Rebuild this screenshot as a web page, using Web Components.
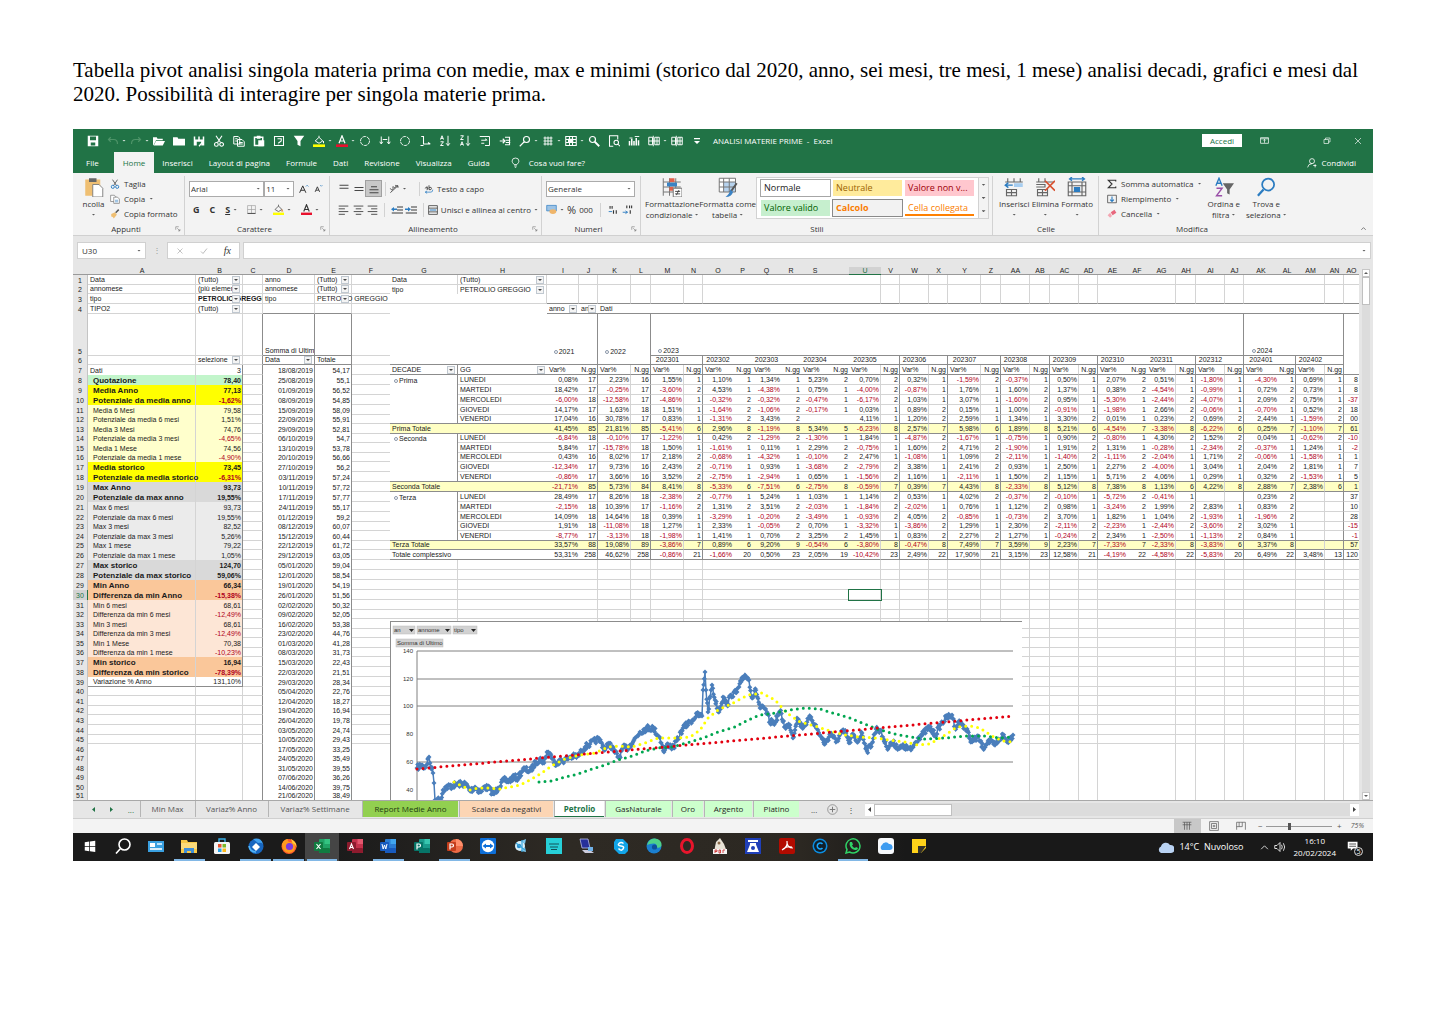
<!DOCTYPE html>
<html lang="it">
<head>
<meta charset="utf-8">
<title>Tabella pivot analisi singola materia prima</title>
<style>
html,body{margin:0;background:#fff}
</style>
</head>
<body>
<doc-page>
  <span slot="intro">Tabella pivot analisi singola materia prima con medie, max e minimi (storico dal 2020, anno, sei mesi, tre mesi, 1 mese) analisi decadi, grafici e mesi dal 2020. Possibilità di interagire per singola materie prima.</span>
  <title-bar></title-bar>
  <ribbon-tabs></ribbon-tabs>
  <ribbon-bar></ribbon-bar>
  <formula-bar></formula-bar>
  <sheet-view></sheet-view>
  <sheet-tabs></sheet-tabs>
  <status-bar></status-bar>
  <task-bar></task-bar>
</doc-page>
<script>
const UI = '"Open Sans","Noto Sans",sans-serif';
const RESET = `:host,*{box-sizing:border-box}
button,input,select{font:inherit;color:inherit;margin:0;padding:0;border:0;background:none;border-radius:0}
button{display:flex;align-items:center;justify-content:center;white-space:nowrap}
a{color:inherit;text-decoration:none}`;

/* Registers a custom element whose shadow root is filled by html(host). */
function define(name, css, html) {
  customElements.define(name, class extends HTMLElement {
    connectedCallback() {
      if (this.shadowRoot) return;
      this.attachShadow({ mode: 'open' }).innerHTML = `<style>${RESET}${css}</style>` + html(this);
    }
  });
}

/* ---------- icons (16 unit box) ---------- */
const S = (d, w = 1.3, c = 'currentColor') => `<path d="${d}" fill="none" stroke="${c}" stroke-width="${w}"/>`;
const F = (d, c = 'currentColor') => `<path d="${d}" fill="${c}"/>`;
const R = (x, y, w, h, c, rx = 0) => `<rect x="${x}" y="${y}" width="${w}" height="${h}" fill="${c}" rx="${rx}"/>`;
const C = (x, y, r, c) => `<circle cx="${x}" cy="${y}" r="${r}" fill="${c}"/>`;
const office = (dark, mid, light) => R(5, 1, 11, 14, mid, 1) + R(10.5, 1, 5.5, 5, light) + R(5, 10, 11, 5, dark, 1) + R(0, 4, 9, 9, dark, 1);
const ICONS = {
  save: F('M1 1h14v14H1zM4 2v5h8V2zM5 10v4h6v-4z').replace('/>', ' fill-rule="evenodd"/>'),
  undo: S('M5 3L2 6l3 3M2 6h7q5 0 5 6', 1.6, '#4e9469'),
  redo: S('M11 3l3 3-3 3M14 6H7q-5 0-5 6', 1.6, '#4e9469'),
  open: F('M0 14V3h5l1 2h7v2H4l-3 6zM4 8h12l-3 6H1z'),
  folder: F('M0 3h6l1 2h9v9H0z'),
  saveas: F('M1 2h2v4h4V2h2v4h4V2h2v12h-4V9H5v5H1z') + S('M8 15l6-7', 1.6),
  cut: S('M4 1l6 9M12 1L6 10', 1.5) + S('M7 12.500a2.500 2.500 0 1 1-5 0a2.500 2.500 0 1 1 5 0M14 12.500a2.500 2.500 0 1 1-5 0a2.500 2.500 0 1 1 5 0', 1.5),
  cutc: S('M4 1l6 9M12 1L6 10', 1.4, '#555') + S('M7 12.500a2.500 2.500 0 1 1-5 0a2.500 2.500 0 1 1 5 0M14 12.500a2.500 2.500 0 1 1-5 0a2.500 2.500 0 1 1 5 0', 1.5, '#2b7cc1'),
  copy: S('M1 2h6l2 2v8H1zM6 6h6l3 3v6H6zM3 5h3M3 8h3M8 10h5M8 12h5'),
  copyc: `<path d="M1 2h6l2 2v8H1z" fill="#fff" stroke="#666"/><path d="M6 5h6l3 3v7H6z" fill="#fff" stroke="#666"/>` + S('M8 10h5M8 12.500h5', 1, '#2b7cc1'),
  paste: S('M2 3h11v11H2z', 2) + F('M5 1h5v4H5zM7 7h8v8H7z'),
  preview: S('M2 2h12v12H2zM6 5h5v3l-4 3M7 13v1', 1.4),
  funnel: F('M1 1h14L10 8v7l-4-2V8z'),
  fill: S('M3 8l5-5 5 5-5 3zM8 3V1M14 8v3', 1.3) + R(0, 12.5, 16, 3.5, '#ff0'),
  fillc: S('M3 8l5-5 5 5-5 3zM8 3V1', 1.2, '#555') + F('M13 7l2 4h-3z', '#e08a3c') + R(0, 12.5, 16, 3.5, '#ff0'),
  fontcolor: S('M4 11L8 1l4 10M5.500 8h5', 1.6) + R(0, 12.5, 16, 3.5, '#e8112d'),
  ring: `<circle cx="8" cy="8" r="6" fill="none" stroke="currentColor" stroke-width="1.2" stroke-dasharray="5 1"/>`,
  arrows: S('M3 2v9M1 9l2 3 2-3M13 2v9M11 9l2 3 2-3M5 6h6', 1.3),
  corner: S('M3 2h3v10h9M12 10l3 2M2 14h4', 1.4),
  sortaz: S('M2 6l2-5 2 5M2.500 4.500h3M2 9h4l-4 5h4M12 1v13M9.500 11l2.500 3 2.500-3', 1.3),
  sortza: S('M2 1h4L2 6h4M2 14l2-5 2 5M2.500 12.500h3M12 1v13M9.500 11l2.500 3 2.500-3', 1.3),
  boxarrow: S('M1 2h13v12H8M3 7h7M8 5l3 2M3 11h4', 1.3),
  indent: S('M1 8h7M5 5l3 3-3 3M8 3h6v10H8M9 7h6M9 10h6', 1.5),
  loupe: S('M14 6a4 4 0 1 1-8 0a4 4 0 1 1 8 0M7 9l-6 6', 1.5),
  loupe2: S('M10 6a4 4 0 1 1-8 0a4 4 0 1 1 8 0', 1.6) + S('M9 9l6 6', 2.4),
  gridstar: S('M2 4h12M2 8h12M2 12h12M4 2v12M8 2v12M12 2v12', 1.2),
  table: S('M1 2h14v12H1zM1 6h14M1 10h14M6 2v12M10 2v12', 1.4) + R(4, 5, 7, 5, 'currentColor'),
  pageloupe: S('M13 6V1H2v14h5M14 10a3 3 0 1 1-6 0a3 3 0 1 1 6 0M13 12l3 3', 1.4),
  chart: S('M2 14V8M5 14V5M8 14V8M11 14V4M14 14V7', 2) + S('M2 4h4M9 2h6', 1.2),
  pivot: S('M1 3h5v10H1zM9 3h6v10H9zM1 8h14M12 3v10M7 1v14', 1.3),
  more: F('M4 4h8v1.500H4zM4 8h8l-4 4z'),
  disp: S('M1 3h14v10H1zM8 12V6M6 8l2-2 2 2M1 5h14', 1.3),
  restore: S('M2 5h9v8H2zM5 5V2h9v8h-3', 1.3),
  close: S('M2 2l12 12M14 2L2 14', 1.3),
  bulb: S('M6 11q-3-3-3-5a5 4.500 0 0 1 10 0q0 2-3 5zM6 13h4M7 15h2', 1.2),
  person: S('M12 5a4 4 0 1 1-8 0a4 4 0 1 1 8 0M1 15q1-6 7-6M10 12h5M13 10v5', 1.3),
  clip: `<rect x="1" y="2" width="12" height="13" fill="#efbf72"/><path d="M4 1h6v3H4z" fill="#666"/><path d="M7 6h5l3 3v7H7z" fill="#fff" stroke="#777" stroke-width=".7"/>`,
  brush: S('M14 1L9 6', 2.4, '#555') + F('M2 8l6-3 3 4-5 6q-1-3-4-3z', '#efbf72'),
  Aup: S('M1 14L6 3l5 11M3 10h6', 1.6) + S('M11 4l2-2 2 2', 1.2, '#2b7cc1'),
  Adn: S('M2 14L6 5l4 9M3.500 11h5', 1.6) + S('M11 2l2 2 2-2', 1.2, '#2b7cc1'),
  borders: S('M1 1h14v14H1zM1 8h14M8 1v14', 1.1, '#999') + S('M1 15h14', 1.4),
  vtop: S('M2 3h12M2 7h12', 1.2), vmid: S('M2 6h12M2 10h12', 1.2), vbot: S('M2 9h12M2 13h12M4 5h8', 1.2),
  left: S('M1 3h14M1 7h9M1 11h14M1 15h9', 1.2), mid: S('M1 3h14M4 7h8M1 11h14M4 15h8', 1.2), right: S('M1 3h14M6 7h9M1 11h14M6 15h9', 1.2),
  orient: S('M2 14L13 4M10 4h3v3M2 8a2 2 0 1 0 3-2M6 5a2 2 0 1 0 3-2', 1.2),
  outd: S('M8 4h8M8 8h8M1 12h15', 1.3) + F('M0 7l4-3v2h4v2H4v2z', '#2b7cc1'),
  ind: S('M8 4h8M8 8h8M1 12h15', 1.3) + F('M8 7L4 4v2H0v2h4v2z', '#2b7cc1'),
  wrap: S('M2 7a2 2 0 1 1 3 2V4M8 2v7q4 1 4-2t-4-1', 1.3) + S('M2 13h9q3 0 3-4M5 11l-3 2 3 2', 1.2, '#2b7cc1'),
  merge: S('M1 1h14v14H1zM1 5h14M1 11h14', 1.2) + S('M3 8h10', 1.6, '#2b7cc1'),
  money: R(1, 2, 14, 8, '#9cc3e6') + S('M1 2h14v8H1z', 1, '#2b7cc1') + `<ellipse cx="10" cy="11" rx="5" ry="3.500" fill="#efb56a"/>`,
  decup: S('M3 3v4M6 3v4M8 9v5M12 9v5', 1.6) + S('M1 11h5', 1.3, '#2b7cc1'),
  decdn: S('M7 2v4M11 2v4M14 2v4M12 9v5', 1.6) + S('M1 12h7M5 10l3 2-3 2', 1.3, '#2b7cc1'),
  condfmt: S('M1 1v14M6 1v14M11 1v8M1 4h14M1 8h14M1 12h8', .8, '#777') + R(6, 1, 4, 3, '#e2604a') + R(4, 4.500, 8, 3, '#3a82c4') + R(6, 8, 3, 3, '#e2604a') + `<path d="M9 9h7v7H9z" fill="#fff" stroke="#777" stroke-width=".8"/>` + S('M10.500 11.500h4M10.500 13.500h4M13.500 10.500l-2 4', .7),
  fmttable: R(1, 1, 13, 11, '#fff') + R(4.5, 4, 9.5, 8, '#b7d3ee') + S('M1 1h13v11H1zM1 4h13M1 8h13M4.500 1v11M9 1v11', .8, '#777') + S('M15 5l-5 7', 1.6, '#555') + F('M10 10l2 2q-1 4-6 4q3-2 4-6z', '#3a82c4'),
  ins: S('M3 1v3M8 1v3M13 1v3M1 4h14M2 10h8v5H2zM6 10v5M2 12.500h8', .9, '#666') + R(8, 5, 7, 3, '#a6cdf0') + S('M7 6.500H1M3.500 4.500l-2.500 2 2.500 2', 1.1, '#2b7cc1'),
  del: S('M3 1v3M8 1v3M1 4h14M2 10h8v5H2zM6 10v5M2 12.500h8M1 6h7v2H1', .9, '#666') + S('M8 3l8 8M16 3l-8 8', 1.4, '#d8502e'),
  fmt: S('M1 4h14v11H1zM1 7h14M1 12h14M4 4v11M12 4v11', .9, '#666') + R(5.500, 8, 5, 4, '#2b7cc1') + S('M2 1.500h12M4 0L2 1.500 4 3M12 0l2 1.500L12 3', 1, '#2b7cc1'),
  sum: S('M14 4V2H2l6 6-6 6h12v-2', 1.8),
  down: S('M1 2h14v12H1z', 1.1) + S('M8 4v8M5 9l3 3 3-3', 1.8, '#2b7cc1'),
  eraser: F('M6 5l6-4 3 5-6 4z', '#e8677d') + F('M5 6l3 5-3 3-4-4z', '#f3a6b2'),
  sortfilter: S('M1.500 7L4 1l2.500 6M2.500 5h3', 1.1, '#2b7cc1') + S('M2 9h4.500L2 15h4.500', 1.1, '#9a4fa8') + F('M7 5h9l-3.500 5v4l-2-1v-3z', '#666'),
  find: S('M14.500 6a4.800 4.800 0 1 1-9.600 0a4.800 4.800 0 1 1 9.600 0', 1.4, '#2b7cc1') + S('M6 10l-4.500 5', 1.8, '#2b7cc1'),
  launch: S('M2 10V2h8M6 6l7 7M13 8v5H8', 1.4, '#666'),
  up: S('M3 11l5-5 5 5', 1.4),
  cross: S('M3 3l10 10M13 3L3 13', 1.4, '#aaa'), tick: S('M2 9l4 4 8-10', 1.6, '#aaa'),
  plus: `<circle cx="8" cy="8" r="7" fill="none" stroke="#777"/>` + S('M8 4v8M4 8h8', 1.4, '#777'),
  vnormal: S('M1 2h14M1 6h14M4 2v12M8 2v12M12 2v12', 1.1), vpage: S('M1 1h14v14H1zM4 4h8v8H4zM6 7h4M6 9h4', 1.1), vbreak: S('M1 14V2h14v12M5 2v7M10 2v7H1', 1.1),
  /* task bar */
  win: F('M1 3l6-1v6H1zM8 2l7-1v7H8zM1 9h6v6l-6-1zM8 9h7v7l-7-1z', '#fff'),
  search: S('M15 6.500a5.500 5.500 0 1 1-11 0a5.500 5.500 0 1 1 11 0M5.500 10.500L1 15.500', 1.6, '#fff'),
  card: R(0, 3, 16, 11, '#3aa0e0') + R(2, 5, 5, 4, '#fff') + R(9, 5, 5, 2, '#bfe3fa') + R(2, 10, 12, 2, '#d9eefb'),
  explorer: F('M0 2h6l1 2h9v11H0z', '#f7c948') + R(0, 5, 16, 6, '#fbdb7a') + F('M3 15v-5h10v5h-3v-2H6v2z', '#3f8fd8'),
  store: S('M5 4V1h6v3', 1.4, '#38b0e8') + R(0, 4, 16, 12, '#f4f4f4', 1.5) + R(4, 6, 3.500, 3.500, '#e8502e') + R(8.500, 6, 3.500, 3.500, '#7cb928') + R(4, 10.500, 3.500, 3.500, '#2aa3e8') + R(8.500, 10.500, 3.500, 3.500, '#fbb91c'),
  bird: C(8, 8.500, 7.500, '#1766c0') + F('M5 1q8-2 10 5q-2-2-5-1z', '#3fa0f0') + F('M8 5l4 4-4 4-4-4z', '#fff') + S('M1 8q1 6 7 6', 1.6, '#4fb3f7'),
  firefox: C(8, 8.500, 7.500, '#ff5a2a') + F('M1 6q2-5 6-5q-1 2 1 3q6 0 6 5q0 5-6 6Q1 14 1 6z', '#ff9a1f') + C(8.500, 8.500, 3.600, '#7b3ae0') + F('M10 1q6 3 5.500 9q-1-4-4-5z', '#ffcf3a'),
  excel: office('#107c41', '#21a366', '#33c481') + S('M2.500 6l4 5M6.500 6l-4 5', 1.2, '#fff'),
  access: office('#8e1b2e', '#c4314b', '#e4576e') + S('M2.500 11L4.500 6l2 5M3.200 9.500h2.600', 1.1, '#fff'),
  word: office('#185abd', '#2b7cd3', '#41a5ee') + S('M2 6l1.200 5L4.500 7l1.300 4L7 6', 1, '#fff'),
  publisher: office('#077568', '#1a9b8c', '#37c6b0') + S('M3 11.500V6h2a1.500 1.500 0 0 1 0 3H3', 1.2, '#fff'),
  ppt: C(9, 8, 7, '#ed6c47') + F('M9 1a7 7 0 0 1 7 7H9z', '#ff8f6b') + R(0, 4, 9, 9, '#c43e1c', 1) + S('M3 11.500V6h2a1.500 1.500 0 0 1 0 3H3', 1.2, '#fff'),
  teamv: R(0, 0, 16, 16, '#0e6fd8', 1) + C(8, 8, 6.200, '#fff') + F('M2.500 8L6 5.500V7h4V5.500L13.500 8 10 10.500V9H6v1.500z', '#0e6fd8'),
  fan: C(7, 8, 5, '#d8f0fa') + C(6, 8, 2.200, '#2b8fd0') + F('M8 3l5-2-1 5zM8 13l5 1-1-5z', '#7cc7ee') + S('M9 2v12M3 5l9 7', 1.2, '#3aa6dc'),
  prime: R(0, 0, 16, 16, '#27d0d8') + S('M3 6h10M4 9h8M5 11.500h6', 1, '#12525a'),
  pc: F('M1 1h8l2 9H3z', '#27309a') + S('M1 1h8l2 9H3z', .8, '#b8bce8') + F('M3 12h8l4 3H6z', '#ccd') + R(9, 9, 5, 4, '#6fb1e8'),
  skype: F('M3 1h7l5 5v7l-3 3H6l-5-5V4z', '#12a5e8') + S('M10.500 5.500Q8 3.500 6 5.500T8 8t2 3-4.500-.500', 1.500, '#fff'),
  edge: C(8, 8, 7.500, '#1b7fd0') + F('M1 7q2-7 8-6.500 7 1 6.500 7-1 3-5 2 1-4-3-4-4 0-6.500 1.500z', '#4fd08a') + C(8.500, 9, 2.600, '#0e4f9a'),
  opera: `<ellipse cx="8" cy="8" rx="5.500" ry="6.500" fill="none" stroke="#e8152c" stroke-width="3"/>`,
  pdf24: F('M4 4l4-4 4 6 3 8H2z', '#e8e2d6') + C(7, 5, 1.500, '#8a6a4a') + R(1, 11, 14, 5, '#f4f4f4') + S('M3 15v-3h2v1.500H3M7 12v3h1.500v-3zM11 15v-3h2', .8, '#c22'),
  scale: R(0, 0, 16, 16, '#1f3fb8') + R(3, 2, 10, 2, '#fff') + F('M5 5h6v1.500L14 14H2l3-7.500z', '#fff') + C(8, 10, 2, '#1f3fb8'),
  acro: R(0, 0, 16, 16, '#b30b00', 2) + S('M3 12q6-3 5-9M8 4q0 6 6 6M4 11q4-3 9-2', 1.2, '#fff'),
  ccc: C(8, 8, 7.500, '#0c8de0') + C(8, 8, 6, '#10202c') + S('M10.500 6a3 3 0 1 0 0 4', 1.500, '#18a8ff'),
  wa: S('M15 8a7 7 0 0 1-10.500 6L1 15l1-3.500A7 7 0 1 1 15 8z', 1.500, '#2fd366') + F('M5 4l2 0 1 2.500-1 1q1 2 3 2.500l1-1 2 1q0 2.500-3 2Q5 11 4.500 6z', '#2fd366'),
  icloud: R(0, 0, 16, 16, '#f6f8fb', 3) + F('M4 12a3 3 0 0 1 0-5 4 4 0 0 1 7-1 3 3 0 0 1 1 6z', '#3d9bf0'),
  note: F('M1 1h14v9l-5 5H1z', '#ffd21a') + F('M7 8h8l-5 7H7z', '#33312a'),
  cloud: F('M3 14a3.500 3.500 0 0 1 0-6.500 5 5 0 0 1 9-1.500 4 4 0 0 1 1 8z', '#b9d2f2'),
  chevup: S('M2 11l6-6 6 6', 1.4, '#fff'),
  vol: S('M1 6h3l4-4v12l-4-4H1zM10 5q2 3 0 6M12.500 3q3.500 5 0 10', 1.1, '#fff'),
  msg: F('M1 1h13v9H8l-3 3v-3H1z', '#fff') + S('M3 4h9M3 7h9', 1, '#222')
};
define('x-icon', ':host{display:inline-flex;flex:none}svg{display:block}', h => {
  const s = h.getAttribute('size') || 12;
  return `<svg width="${s}" height="${s}" viewBox="0 0 16 16" aria-hidden="true">${ICONS[h.getAttribute('name')] || ''}</svg>`;
});
define('x-arrow', ':host{display:inline-block;flex:none;width:4px;height:2px;background:currentColor;clip-path:polygon(0 0,100% 0,50% 100%);opacity:.8}', () => '');

/* ---------- page ---------- */
define('doc-page', `:host{display:block;padding:58px 72px 0 73px;color:#000}
p{margin:0 0 23px;font:21px/24px "Liberation Serif",serif}
main{display:flex;flex-direction:column;overflow:hidden;font:8px/10px ${UI};color:#333}`,
  () => `<p><slot name="intro"></slot></p><main><slot></slot></main>`);

/* ---------- title bar ---------- */
const QAT = ['save', 'undo+', 'redo+', 'open', 'folder', 'saveas', 'cut', 'copy', 'paste', 'preview', 'funnel', 'fill+', 'fontcolor+', 'ring', 'arrows', 'ring', 'corner', 'sortaz', 'sortza', 'boxarrow', 'indent', 'loupe+', 'gridstar+', 'table+', 'loupe2', 'pageloupe', 'chart', 'pivot+', 'pivot', 'more'];
define('title-bar', `:host{display:flex;height:23px;background:#217346;color:#fff;align-items:center;padding-left:10px}
button{width:20px;height:20px}button.m{width:23px;gap:3px;padding-left:4px}
nav{display:flex;flex:none}h1{font:inherit;margin:0 auto 0 6px;white-space:pre}
.in{background:#fff;color:#217346;width:40px;height:13px;margin-right:7px}.w{width:31px}`,
  () => `<nav>${QAT.map(n => { const m = n.endsWith('+'), k = n.replace('+', ''); return `<button class="${m ? 'm' : ''}" aria-label="${k}"><x-icon name="${k}"></x-icon>${m ? '<x-arrow></x-arrow>' : ''}</button>`; }).join('')}</nav>
<h1>ANALISI MATERIE PRIME  -  Excel</h1><button class="in">Accedi</button>
<button class="w" aria-label="ribbon"><x-icon name="disp" size="9"></x-icon></button><button class="w" aria-label="minimize"></button>
<button class="w" aria-label="restore"><x-icon name="restore" size="8"></x-icon></button><button class="w" aria-label="close"><x-icon name="close" size="8"></x-icon></button>`);

define('ribbon-tabs', `:host{display:flex;height:21px;background:#217346;color:#fff;align-items:stretch}
button{padding:0 8px}.file{padding:0 15px 0 13px}.on{background:#f3f3f3;color:#217346;padding:0 9px}
.tell{gap:8px;padding-left:12px}.share{margin-left:auto;padding-right:17px;gap:4px}`,
  () => `<button class="file">File</button><button class="on">Home</button>${['Inserisci', 'Layout di pagina', 'Formule', 'Dati', 'Revisione', 'Visualizza', 'Guida'].map(t => `<button>${t}</button>`).join('')}
<button class="tell"><x-icon name="bulb" size="11"></x-icon>Cosa vuoi fare?</button><button class="share"><x-icon name="person" size="10"></x-icon>Condividi</button>`);

/* ---------- ribbon ---------- */
define('x-combo', `:host{display:flex;align-items:center;background:#fff;border:1px solid #ababab;height:16px;padding:0 3px 0 1px}
select{appearance:none;flex:1;min-width:0;height:100%;outline:0}`,
  h => `<select aria-label="${h.getAttribute('label')}"><option>${h.getAttribute('value')}</option></select><x-arrow></x-arrow>`);
define('rb-group', `:host{display:flex;flex-direction:column;flex:none;border-right:1px solid #d2d2d2;padding:0 3px 0 4px}
.b{flex:1;min-height:0}.f{display:flex;justify-content:center;align-items:center;height:13px}.f span{flex:1;text-align:center}`,
  h => `<div class="b"><slot></slot></div><div class="f"><span>${h.getAttribute('label')}</span>${h.hasAttribute('launch') ? '<x-icon name="launch" size="6"></x-icon>' : ''}</div>`);
const ic = (n, s = 12, cls = '', arrow = false) => `<button class="${cls}" aria-label="${n}"><x-icon name="${n}" size="${s}"></x-icon>${arrow ? '<x-arrow></x-arrow>' : ''}</button>`;
const big = (n, t1, t2 = '', s = 20) => `<button class="big"><x-icon name="${n}" size="${s}"></x-icon><span>${t1}</span><span>${t2}<x-arrow></x-arrow></span></button>`;
define('ribbon-bar', `:host{display:flex;height:63px;background:#f3f3f3;border-bottom:1px solid #d0d0d0;padding-top:3px}
.row{display:flex;align-items:center;height:21px}.row:first-child{height:23px;padding-top:2px}
.row button{height:15px;gap:3px}
.big{flex-direction:column;justify-content:flex-start;gap:2px;line-height:10px;padding-top:1px}.big span{display:flex;align-items:center;gap:2px;height:9px}
.cols{display:flex}.list{display:flex;flex-direction:column;gap:4px;padding-top:2px}.list button{justify-content:flex-start;gap:4px;height:11px}
.w15 button{width:15px}.sel{background:#c8c8c8;outline:1px solid #a0a0a0}.sep{width:1px;height:14px;background:#d2d2d2;margin:0 4px}
b,i,u{font-size:9px}
.gal{display:grid;grid-template-columns:repeat(3,69px);gap:3px;background:#fff;border:1px solid #d2d2d2;padding:2px 4px 2px 4px;margin-top:1px}
.gal button{justify-content:flex-start;padding-left:3px;height:16px;font-size:9px}
.gs{display:flex;flex-direction:column;justify-content:space-around;align-items:center;width:11px;border:1px solid #d2d2d2;border-left:0;margin-top:1px}
.end{margin:auto 6px 3px auto}`,
  () => `
<rb-group label="Appunti" launch style="width:112px"><div class="cols"><button class="big" style="width:33px"><x-icon name="clip" size="20"></x-icon><span>ncolla</span><span><x-arrow></x-arrow></span></button>
<div class="list"><button><x-icon name="cutc" size="10"></x-icon>Taglia</button><button><x-icon name="copyc" size="10"></x-icon>Copia<x-arrow></x-arrow></button><button><x-icon name="brush" size="10"></x-icon>Copia formato</button></div></div></rb-group>
<rb-group label="Carattere" launch style="width:145px"><div class="row"><x-combo label="Tipo di carattere" value="Arial" style="width:76px"></x-combo><x-combo label="Dimensione" value="11" style="width:30px"></x-combo><span class="row w15" style="padding:0 0 0 2px;height:21px">${ic('Aup', 10)}${ic('Adn', 9)}</span></div>
<div class="row" style="justify-content:space-between;padding:0 7px 0 4px"><button><b>G</b></button><button><b>C</b></button><button><b><u>S</u></b><x-arrow></x-arrow></button>${ic('borders', 9, '', 1)}${ic('fillc', 11, '', 1)}${ic('fontcolor', 11, '', 1)}</div></rb-group>
<rb-group label="Allineamento" launch style="width:212px"><div class="row w15" style="padding-left:2px">${ic('vtop')}${ic('vmid')}${ic('vbot', 12, 'sel')}<span class="sep"></span>${ic('orient', 11, '', 1)}<span class="sep" style="margin-left:14px"></span><button style="width:auto"><x-icon name="wrap" size="10"></x-icon>Testo a capo</button></div>
<div class="row w15" style="padding-left:2px">${ic('left', 11)}${ic('mid', 11)}${ic('right', 11)}<span class="sep"></span>${ic('outd')}${ic('ind')}<span class="sep"></span><button style="width:auto"><x-icon name="merge" size="10"></x-icon>Unisci e allinea al centro<x-arrow></x-arrow></button></div></rb-group>
<rb-group label="Numeri" launch style="width:99px"><div class="row"><x-combo label="Formato numero" value="Generale" style="width:89px"></x-combo></div>
<div class="row" style="justify-content:space-between;padding-right:4px">${ic('money', 11, '', 1)}<button><b style="font-weight:400;font-size:11px">%</b></button><button>000</button><span class="sep"></span>${ic('decup', 11)}${ic('decdn', 11)}</div></rb-group>
<rb-group label="Stili" style="width:352px"><div class="cols"><span class="cols" style="width:113px;justify-content:space-between">${big('condfmt', 'Formattazione', 'condizionale')}${big('fmttable', 'Formatta come', 'tabella')}</span>
<span class="gal"><button style="outline:1px solid #a6a6a6;color:#222">Normale</button><button style="background:#ffeb9c;color:#9c6500">Neutrale</button><button style="background:#ffc7ce;color:#9c0006">Valore non v...</button><button style="background:#c6efce;color:#006100">Valore valido</button><button style="background:#f2f2f2;outline:1px solid #8a8a8a;color:#fa7d00;font-weight:700">Calcolo</button><button style="color:#fa7d00;box-shadow:inset 0 -2px #ff8001">Cella collegata</button></span><span class="gs"><x-arrow></x-arrow><x-arrow></x-arrow><x-arrow></x-arrow></span></div></rb-group>
<rb-group label="Celle" style="width:106px"><div class="cols" style="justify-content:space-between;padding:0 2px">${big('ins', 'Inserisci')}${big('del', 'Elimina')}${big('fmt', 'Formato')}</div></rb-group>
<rb-group label="Modifica" style="width:185px;border:0"><div class="cols" style="gap:6px;padding-left:4px"><div class="list" style="width:96px"><button><x-icon name="sum" size="10"></x-icon>Somma automatica<x-arrow></x-arrow></button><button><x-icon name="down" size="10"></x-icon>Riempimento<x-arrow></x-arrow></button><button><x-icon name="eraser" size="10"></x-icon>Cancella<x-arrow></x-arrow></button></div>${big('sortfilter', 'Ordina e', 'filtra')}${big('find', 'Trova e', 'seleziona')}</div></rb-group>
<button class="end" aria-label="collapse"><x-icon name="up" size="7"></x-icon></button>`);

define('formula-bar', `:host{display:flex;height:31px;background:#e6e6e6;padding:6px 2px 8px 4px;gap:3px}
label,.b,.f{display:flex;align-items:center;background:#fff;border:1px solid #d0d0d0}
label{width:69px;padding:0 4px 0 4px}label input{flex:1;min-width:0}
.d{width:15px;text-align:center;color:#999;line-height:16px}.b{width:73px;justify-content:space-around}.f{flex:1;padding-right:4px}.f input{flex:1;height:100%}
i{font:italic 10px "Liberation Serif",serif}`,
  () => `<label><input aria-label="Casella nome" value="U30"><x-arrow></x-arrow></label><span class="d">⋮</span>
<span class="b"><button aria-label="annulla"><x-icon name="cross" size="8"></x-icon></button><button aria-label="invio"><x-icon name="tick" size="8"></x-icon></button><button><i>fx</i></button></span><span class="f"><input aria-label="Barra della formula"><x-arrow></x-arrow></span>`);

/* ---------- worksheet ---------- */
const COLS = 'A108 B47 C20 D52 E37 F38 G68 H89 I32 J19 K33 L20 M33 N19 O30 P19 Q29 R20 S28 T20 U32 V19 W29 X19 Y33 Z20 AA29 AB20 AC29 AD19 AE29 AF20 AG29 AH20 AI29 AJ19 AK34 AL18 AM29 AN19'.split(' ').map(s => s.match(/([A-Z]+)(\d+)/).slice(1)).concat([['AO', '']]);
const HEIGHTS = [10, 9, 10, 10, 42, 9, 10, 10, 10, 10, 10, 9, 10, 9, 10, 9, 10, 10, 10, 10, 10, 10, 9, 10, 9, 10, 10, 10, 10, 10, 10, 9, 10, 9, 10, 9, 10, 10, 10, 9, 10, 9, 10, 10, 9, 10, 9, 10, 9, 10, 8];
const SUMMARY = `Quotazione|78,40;Media Anno|77,13;Potenziale da media anno|-1,62%;Media 6 Mesi|79,58;Potenziale da media 6 mesi|1,51%;Media 3 Mesi|74,76;Potenziale da media 3 mesi|-4,65%;Media 1 Mese|74,56;Potenziale da media 1 mese|-4,90%;Media storico|73,45;Potenziale da media storico|-6,31%;Max Anno|93,73;Potenziale da max anno|19,55%;Max 6 mesi|93,73;Potenziale da max 6 mesi|19,55%;Max 3 mesi|82,52;Potenziale da max 3 mesi|5,26%;Max 1 mese|79,22;Potenziale da max 1 mese|1,05%;Max storico|124,70;Potenziale da max storico|59,06%;Min Anno|66,34;Differenza da min Anno|-15,38%;Min 6 mesi|68,61;Differenza da min 6 mesi|-12,49%;Min 3 mesi|68,61;Differenza da min 3 mesi|-12,49%;Min 1 Mese|70,38;Differenza da min 1 mese|-10,23%;Min storico|16,94;Differenza da min storico|-78,39%;Variazione % Anno|131,10%`.split(';').map(s => s.split('|'));
const TOTALS = '54,17 55,1 56,52 54,85 58,09 55,91 52,81 54,7 53,78 56,66 56,2 57,24 57,72 57,77 55,17 59,2 60,07 60,44 61,72 63,05 59,04 58,54 54,19 51,56 50,32 52,05 53,38 44,76 41,28 31,73 22,43 21,51 28,34 22,76 18,27 16,94 19,78 24,74 29,43 33,25 35,49 39,55 36,26 39,75 38,49'.split(' ');
/* value/count pairs for each period, then the start of the next column; "_" is an empty cell */
const PIVOT = `0,08 17 2,23 16 1,55 1 1,10 1 1,34 1 5,23 2 0,70 2 0,32 1 -1,59 2 -0,37 1 0,50 1 2,07 2 0,51 1 -1,80 1 -4,30 1 0,69 1 8
18,42 17 -0,25 17 -3,60 2 4,53 1 -4,38 1 0,75 1 -4,00 2 -0,87 1 1,76 1 1,60 2 1,37 1 0,38 2 -4,54 1 -0,99 1 0,72 2 0,73 1 8
-6,00 18 -12,58 17 -4,86 1 -0,32 2 -0,32 2 -0,47 1 -6,17 2 1,03 1 3,07 1 -1,60 2 0,95 1 -5,30 1 -2,44 2 -4,07 1 2,09 2 0,75 1 -37
14,17 17 1,63 18 1,51 1 -1,64 2 -1,06 2 -0,17 1 0,03 1 0,89 2 0,15 1 1,00 2 -0,91 1 -1,98 1 2,66 2 -0,06 1 -0,70 1 0,52 2 18
17,04 16 30,78 17 0,83 1 -1,31 2 3,43 2 _ _ 4,11 1 1,20 2 2,59 1 1,34 1 3,30 2 0,01 1 0,23 2 0,69 2 2,44 1 -1,59 2 00
41,45 85 21,81 85 -5,41 6 2,96 8 -1,19 8 5,34 5 -6,23 8 2,57 7 5,98 6 1,89 8 5,21 6 -4,54 7 -3,38 8 -6,22 6 0,25 7 -1,10 7 61
-6,84 18 -0,10 17 -1,22 1 0,42 2 -1,29 2 -1,30 1 1,84 1 -4,87 2 -1,67 1 -0,75 1 0,90 2 -0,80 1 4,30 2 1,52 2 0,04 1 -0,62 2 -10
5,84 17 -15,78 18 1,50 1 -1,61 1 0,11 1 2,29 2 -0,75 1 1,60 2 4,71 2 -1,90 1 1,91 2 1,31 1 -0,28 1 -2,34 2 -0,37 1 1,24 1 -2
0,43 16 8,02 17 2,18 2 -0,68 1 -4,32 1 -0,10 2 2,47 1 -1,08 1 1,09 2 -2,11 1 -1,40 2 -1,11 2 -2,04 1 1,71 2 -0,06 1 -1,58 1 1
-12,34 17 9,73 16 2,43 2 -0,71 1 0,93 1 -3,68 2 -2,79 2 3,38 1 2,41 2 0,93 1 2,50 1 2,27 2 -4,00 1 3,04 1 2,04 2 1,81 1 7
-0,86 17 3,66 16 3,52 2 -2,75 1 -2,94 1 0,65 1 -1,56 2 1,16 1 -2,11 1 1,50 2 1,15 1 5,71 2 4,06 1 0,29 1 0,32 2 -1,53 1 5
-21,71 85 5,73 84 8,41 8 -5,33 6 -7,51 6 -2,75 8 -0,59 7 0,39 7 4,43 8 -2,33 8 5,12 8 7,38 8 1,13 6 4,22 8 2,88 7 2,38 6 1
28,49 17 8,26 18 -2,38 2 -0,77 1 5,24 1 1,03 1 1,14 2 0,53 1 4,02 2 -0,37 2 -0,10 1 -5,72 2 -0,41 1 _ _ 0,23 2 _ _ 37
-2,15 18 10,39 17 -1,16 2 1,31 2 3,51 2 -2,03 1 -1,84 2 -2,02 1 0,76 1 1,12 2 0,98 1 -3,24 2 1,99 2 2,83 1 0,83 2 _ _ 10
14,09 18 14,64 18 0,39 1 -3,29 1 -0,20 2 -3,49 1 -0,93 2 4,05 2 -0,85 1 -0,73 2 3,70 1 1,82 1 1,04 2 -1,93 1 -1,96 2 _ _ 28
1,91 18 -11,08 18 1,27 1 2,33 1 -0,05 2 0,70 1 -3,32 1 -3,86 2 1,29 1 2,30 2 -2,11 2 -2,23 1 -2,44 2 -3,60 2 3,02 1 _ _ -15
-8,77 17 -3,13 18 -1,98 1 1,41 1 0,70 2 3,25 2 1,45 1 0,83 2 2,27 2 1,27 1 -0,24 2 2,34 1 -2,50 1 -1,13 2 0,84 1 _ _ -1
33,57 88 19,08 89 -3,86 7 0,89 6 9,20 9 -0,54 6 -3,80 8 -0,47 8 7,49 7 3,59 9 2,23 7 -7,33 7 -2,33 8 -3,83 6 3,37 8 _ _ 57
53,31 258 46,62 258 -0,86 21 -1,66 20 0,50 23 2,05 19 -10,42 23 2,49 22 17,90 21 3,15 23 12,58 21 -4,19 22 -4,58 22 -5,83 20 6,49 22 3,48 13 120`.split('\n').map(l => l.split(' '));
const TOT_ROWS = [13, 19, 25];

function buildCells() {
  const cells = {};
  const put = (ref, t, cls = '') => { cells[ref] = { t, cls }; };
  const fil = t => `<span class="fl"><span>${t}</span><button aria-label="filtro"><x-arrow></x-arrow></button></span>`;
  const exp = t => `<span class="ex"></span>${t}`;
  Object.entries({
    A1: 'Data', B1: fil('(Tutto)'), A2: 'annomese', B2: fil('(più elementi)'), A3: 'tipo', A4: 'TIPO2', B4: fil('(Tutto)'),
    D1: 'anno', E1: fil('(Tutto)'), D2: 'annomese', E2: fil('(Tutto)'), D3: 'tipo', G1: 'Data', H1: fil('(Tutto)'), G2: 'tipo', H2: fil('PETROLIO GREGGIO'),
    I4: fil('anno'), J4: fil('an'), K4: 'Dati', B6: fil('selezione'), D6: fil('Data'), E6: 'Totale', A7: 'Dati', G7: fil('DECADE'), H7: fil('GG')
  }).forEach(([k, v]) => put(k, v));
  put('B3', fil('<span class="cut">PETROLIO GREGGIO</span>'), 'sp b'); put('E3', fil('PETROLIO GREGGIO'), 'sp');
  put('D5', 'Somma di Ultimo', 'clip'); put('B7', '3', 'r');
  put('I5', exp('2021'), 'c'); put('K5', exp('2022'), 'c'); put('M5', exp('2023'), 'c'); put('AK5', exp('2024'), 'c');
  for (let i = 8; i < 40; i += 2) {
    put(COLS[i][0] + 7, 'Var%'); put(COLS[i + 1][0] + 7, 'N.gg', 'r');
    if (i > 11) { const m = (i - 12) / 2; put(COLS[i][0] + 6, m < 12 ? 202301 + m : 202401 + m - 12, 'c'); }
  }
  SUMMARY.forEach(([a, v], i) => {
    const r = i + 8, bold = [8, 9, 10, 17, 18, 19, 20, 27, 28, 29, 30, 37, 38].includes(r);
    const f = r == 8 ? 'gn' : r < 19 ? (bold ? 'y1' : 'y2') : r < 29 ? (bold ? 'g1' : 'g2') : r < 39 ? (bold ? 'o1' : 'o2') : '';
    put('A' + r, a, `in ${f} ${bold ? 'b' : ''}`); put('B' + r, v, `r ${f} ${bold ? 'b' : ''} ${v[0] == '-' ? 'neg' : ''}`);
  });
  TOTALS.forEach((v, i) => {
    const d = new Date(Date.UTC(2019, 7, 18 + 7 * i)), p = n => String(n).padStart(2, '0');
    put('D' + (i + 7), `${p(d.getUTCDate())}/${p(d.getUTCMonth() + 1)}/${d.getUTCFullYear()}`, 'r'); put('E' + (i + 7), v, 'r');
  });
  PIVOT.forEach((row, i) => {
    const r = i + 8;
    row.forEach((v, j) => { if (v != '_') put(COLS[8 + j][0] + r, j % 2 || j == 32 ? v : v + '%', 'r' + (v[0] == '-' ? ' neg' : '')); });
    if (r < 25 && !TOT_ROWS.includes(r)) put('H' + r, ['LUNEDI', 'MARTEDI', 'MERCOLEDI', 'GIOVEDI', 'VENERDI'][i % 6]);
  });
  put('G8', exp('Prima')); put('G14', exp('Seconda')); put('G20', exp('Terza'));
  put('G13', 'Prima Totale'); put('G19', 'Seconda Totale'); put('G25', 'Terza Totale'); put('G26', 'Totale complessivo');
  return cells;
}
/* grid line below a cell: l = light, d = dark */
function below(r, c) {
  if (r > 45) return '';
  if (c < 2) return r < 7 ? 'l' : r < 39 ? '' : r == 39 ? 'd' : 'l';
  if (c == 2 || c == 5) return 'l';
  if (c < 5) return r < 4 ? 'l' : r < 7 ? 'd' : '';
  if (r == 1 || r > 26) return 'l';
  if ([12, 13, 18, 19, 24, 25, 26].includes(r)) return 'd';
  if (r > 7) return c == 6 ? '' : 'l';
  if (c == 40) return r == 3 || r == 4 || r == 7 ? 'd' : '';
  if (r > 5) return 'd';
  if (c < 8) return r == 3 ? 'l' : '';
  if (r == 5) return c > 11 ? 'd' : '';
  return r == 3 || r == 4 ? 'd' : '';
}
/* grid line on the right of a cell */
function beside(r, c) {
  if (c == 0) return 'l';
  if (c == 1) return r > 6 && r < 40 ? 'd' : 'l';
  if (c < 5) return r > 4 ? 'd' : 'l';
  if (c == 5 || c == 40 || (c > 13 && c < 20)) return '';
  if (c == 6) return r < 3 ? 'l' : r < 7 || TOT_ROWS.includes(r) || r == 26 ? '' : r < 26 ? 'd' : 'l';
  if (c == 7 || c == 8) return r < 4 ? 'l' : '';
  if (c == 36 || c == 30 || c == 31) return '';
  if (r < 4) return c == 37 ? '' : 'l';
  if (r == 4) return '';
  if (r == 5) return [9, 11, 35, 39].includes(c) ? 'd' : '';
  if (r < 27) return c % 2 ? 'd' : r == 6 ? '' : 'l';
  return 'l';
}
define('sheet-view', `:host{display:flex;position:relative;overflow:hidden;background:#fff;border-bottom:1px solid #a8a8a8}
table{flex:1;min-width:0;width:0;table-layout:fixed;border-collapse:separate;border-spacing:0;font:7px/8px "Liberation Sans",Arial,sans-serif;color:#1a1a1a}
th,td{padding:0 2px;white-space:nowrap;vertical-align:bottom;text-align:left}
th{background:#e6e6e6;color:#222;font-weight:400;text-align:center;padding:0}
thead th{border-bottom:1px solid #9a9a9a;line-height:7px}thead th.cur{background:#d2d2d2;color:#217346;border-bottom-color:#217346}
tbody th{border-right:1px solid #c4c4c4}tbody th.cur{background:#d2d2d2;border-right-color:#217346;color:#217346}
.bl{border-bottom:1px solid #d4d4d4}.bd{border-bottom:1px solid #8c8c8c}.rl{border-right:1px solid #d4d4d4}.rd{border-right:1px solid #8c8c8c}
.r{text-align:right;padding:0 1px}.c{text-align:center}.b{font-weight:700}.in{padding-left:5px;padding-right:0}.in.b{font-size:8px}.clip{overflow:hidden}
.neg{color:#b00020}.gn{background:#c2f5cb}.y1{background:#ff0}.y2{background:#ffffcc}.g1{background:#d9d9d9}.g2{background:#ebebeb}.o1{background:#fac79a}.o2{background:#fde6d6}
.tot{background:#ffffc4}.sel{outline:1px solid #217346}
.fl{display:flex;align-items:center;height:8px;overflow:hidden}.fl>span{flex:1;min-width:0;overflow:hidden}.sp .fl,.sp .fl>span{overflow:visible}.sp .fl>span{width:0}
.cut{display:block;width:64px;overflow:hidden}
.fl button{width:8px;height:8px;background:#f4f4f4;border:1px solid #c0c8d0;z-index:1;flex:none}
.ex{display:inline-block;width:4px;height:4px;border:1px solid #8a97a8;border-radius:50%;margin:0 1px 0 2px}
aside{display:flex;flex-direction:column;align-items:center;width:14px;background:#dcdcdc;border:solid #e6e6e6;border-width:2px 3px 0 3px}
aside button{width:8px;height:8px;background:#fff;border:1px solid #c6c6c6}aside .th{width:8px;height:28px;background:#fff;border:1px solid #c0c0c0;margin-bottom:auto}
aside .u x-arrow{transform:rotate(180deg)}
price-chart{position:absolute;left:317px;top:354px}`,
  () => {
    const cells = buildCells();
    return `<table><colgroup><col style="width:15px">${COLS.map(c => `<col${c[1] ? ` style="width:${c[1]}px"` : ''}>`).join('')}</colgroup>
<thead><tr style="height:8px"><th></th>${COLS.map(c => `<th scope="col" class="${c[0] == 'U' ? 'cur' : ''}">${c[0] == 'T' ? '' : c[0]}</th>`).join('')}</tr></thead>
<tbody>${HEIGHTS.map((h, i) => {
      const r = i + 1;
      return `<tr style="height:${h}px"><th scope="row" class="${r == 30 ? 'cur' : ''}">${r}</th>${COLS.map(([n], c) => {
        const x = cells[n + r] || { t: '', cls: '' }, b = below(r, c), s = beside(r, c);
        return `<td class="${x.cls}${b ? ' b' + b : ''}${s ? ' r' + s : ''}${c > 5 && TOT_ROWS.includes(r) ? ' tot' : ''}${n + r == 'U30' ? ' sel' : ''}">${x.t}</td>`;
      }).join('')}</tr>`;
    }).join('')}</tbody></table>
<aside><button class="u" aria-label="su"><x-arrow></x-arrow></button><span class="th"></span><button aria-label="giù"><x-arrow></x-arrow></button></aside><price-chart></price-chart>`;
  });

/* ---------- chart ---------- */
const P = s => s.trim().split(' ').map(p => p.split(',').map(Number));
const PRICE = P('27,147 31,144 35,147 39,136 40,142 43,152 44,162 45,179 51,179 53,169 56,166 62,165 68,163 76,163 80,170 85,166 91,171 94,166 98,167 104,173 108,167 114,159 119,160 124,156 128,157 133,148 140,150 146,141 151,138 154,142 157,131 161,134 164,142 168,141 175,139 180,136 188,135 195,126 200,123 208,118 211,121 215,129 219,122 224,130 229,137 233,127 238,127 244,119 250,111 257,107 263,107 270,117 274,131 278,123 283,127 288,118 293,107 300,101 307,94 312,95 313,69 315,51 316,69 318,91 321,69 322,64 325,79 329,91 333,76 337,84 341,74 347,71 351,61 355,54 359,59 362,77 366,69 370,87 375,88 380,101 385,101 390,90 395,106 400,104 403,117 407,97 412,106 417,101 421,96 425,104 430,114 435,123 441,112 446,121 452,111 456,112 459,122 463,114 467,121 472,112 477,130 482,122 486,108 490,109 497,126 503,122 509,127 515,126 521,129 528,117 534,112 539,106 545,114 551,103 556,97 562,94 565,106 570,101 575,106 582,121 588,116 593,127 598,120 605,124 613,114 617,121 623,114');
const YEL = '64,161 72,165 80,169 88,167 100,167 110,168 120,166 130,164 140,159 150,153 163,144 175,138 190,134 205,132 218,126 230,125 242,126 255,122 268,117 288,117 300,116 310,109 318,97 328,89 345,81 358,74 372,72 385,79 397,92 410,101 425,105 440,110 455,114 470,116 485,117 500,119 515,121 528,124 540,123 555,114 567,106 580,105 590,107 602,115 613,120 623,121';
const GRN = '149,161 162,160 175,156 188,153 202,148 215,144 228,139 242,135 255,130 268,127 282,126 300,121 313,117 328,111 345,106 358,99 370,94 385,92 400,89 415,87 430,88 443,92 460,97 472,102 487,108 505,113 520,116 535,118 555,117 575,115 595,115 610,117 623,116';
define('price-chart', `:host{display:block;width:632px;height:179px;background:#fff;border:solid #8c8c8c;border-width:1px 0 0 1px;overflow:hidden}
svg{display:block;margin:-1px 0 0 -1px}text{font:6px "Liberation Sans",sans-serif;fill:#333}
.k{fill:#d2d2d2;stroke:#bbb;stroke-width:.5}.dot{fill:none;stroke-width:3;stroke-linecap:round;stroke-dasharray:0 6}`,
  () => {
    let seed = 7; const rnd = () => (seed = (seed * 16807) % 2147483647) / 2147483647 - .5;
    const pts = [];
    for (let i = 0; i < PRICE.length - 1; i++) {
      const [x, y] = PRICE[i], [X, Y] = PRICE[i + 1];
      const n = Math.max(1, Math.round((X - x) / .7));
      for (let k = 0; k < n; k++) pts.push([x + (X - x) * k / n, y + (Y - y) * k / n + (k ? rnd() * 6 : 0)]);
    }
    pts.push(PRICE[PRICE.length - 1]);
    const f = n => n.toFixed(1);
    const diamonds = pts.map(([x, y]) => `M${f(x)} ${f(y - 2.5)}l2.500 2.500-2.500 2.500-2.500-2.500z`).join('');
    const key = (x, y, w, t, a = 1) => `<rect class="k" x="${x}" y="${y}" width="${w}" height="8"/><text x="${x + 1}" y="${y + 6}">${t}</text>${a ? `<path d="M${x + w - 6} ${y + 3}h5l-2.500 3z" fill="#222"/>` : ''}`;
    return `<svg width="632" height="180" viewBox="0 0 632 180">
${key(3, 5, 22, 'an')}${key(27, 5, 34, 'annome')}${key(63, 5, 24, 'tipo')}${key(6, 18, 47, 'Somma di Ultimo', 0)}
<path d="M27 30H623M27 58H623M27 85H623M27 141H623" stroke="#808080" fill="none"/><path d="M27 30V179" stroke="#808080"/>
${[140, 120, 100, 80, 60, 40].map((v, i) => `<text x="23" y="${[32, 60, 87, 115, 143, 171][i]}" text-anchor="end">${v}</text>`).join('')}
<path d="M${pts.map(p => p.map(f).join(' ')).join('L')}" fill="none" stroke="#4a7ebb" stroke-width="1.500"/><path d="${diamonds}" fill="#4a7ebb"/>
<polyline class="dot" stroke="#ff0" points="${YEL}"/><polyline class="dot" stroke="#00a650" points="${GRN}"/><polyline class="dot" stroke="#e3000f" points="27,148 623,95"/></svg>`;
  });

/* ---------- bottom bars ---------- */
define('sheet-tabs', `:host{display:flex;height:18px;background:#e6e6e6;border-bottom:1px solid #cfcfcf;align-items:stretch;color:#444}
nav{display:flex;gap:1px;font-size:8px}nav a{display:flex;align-items:center;justify-content:center;border-left:1px solid #b5b5b5;height:16px;color:#555;white-space:nowrap}
.nav{display:flex;width:67px;justify-content:space-between;align-items:center;padding:0 6px 0 18px;color:#217346}
.nav x-arrow,.hs x-arrow{width:5px;height:3px;opacity:1}.l{transform:rotate(90deg)}.rt{transform:rotate(-90deg)}
.add{display:flex;align-items:center;justify-content:space-between;width:44px;margin:0 10px 0 12px}
.hs{flex:1;display:flex;align-items:center;margin:2px 14px 2px 0;background:#dcdcdc}.hs button{width:9px;height:12px;background:#fff}.th{width:78px;height:12px;background:#fff;border:1px solid #c0c0c0;margin-right:auto}`,
  () => {
    const T = [['Min Max', 54, ''], ['Variaz% Anno', 72, ''], ['Variaz% Settimane', 93, ''], ['Report Medie Anno', 96, 'background:#92d050;color:#1d3a10'], ['Scalare da negativi', 94, 'background:#fcd5b4;color:#333'], ['Petrolio', 50, 'background:#fff;color:#217346;font-weight:700;border-bottom:1px solid #217346'], ['GasNaturale', 66, 'g'], ['Oro', 31, 'g'], ['Argento', 48, 'g'], ['Platino', 46, 'g']];
    return `<span class="nav"><x-arrow class="l"></x-arrow><x-arrow class="rt"></x-arrow><span>...</span></span><nav>${T.map(([t, w, s]) => `<a href="#" style="width:${w}px;${s == 'g' ? 'background:#ccffcc;color:#222' : s}">${t}</a>`).join('')}</nav>
<span class="add"><span>...</span><x-icon name="plus" size="11"></x-icon><span>⋮</span></span><span class="hs"><button aria-label="sinistra"><x-arrow class="l"></x-arrow></button><span class="th"></span><button aria-label="destra"><x-arrow class="rt"></x-arrow></button></span>`;
  });
define('status-bar', `:host{display:flex;height:14px;background:#f3f3f3;justify-content:flex-end;align-items:center;color:#555;padding-right:9px}
button{width:27px;height:14px}.on{background:#c8c8c8}.s{width:11px}input{appearance:none;width:66px;height:1px;background:#999}
input::-webkit-slider-thumb{appearance:none;width:3px;height:7px;background:#555}label{font-size:7px;padding-left:6px;font-style:italic}`,
  () => `${ic('vnormal', 10, 'on')}${ic('vpage', 10)}${ic('vbreak', 10)}<button class="s">−</button><input id="z" type="range" min="10" max="190" value="75" aria-label="Zoom"><button class="s" style="margin-left:2px">+</button><label for="z">75%</label>`);
const APPS = ['win', 'search', 'card', 'explorer*', 'store', 'bird*', 'firefox*', 'excel*', 'access', 'word*', 'publisher', 'ppt*', 'teamv', 'fan', 'prime', 'pc', 'skype', 'edge', 'opera', 'pdf24', 'scale', 'acro', 'ccc', 'wa*', 'icloud', 'note'];
define('task-bar', `:host{display:flex;height:28px;color:#fff;background:linear-gradient(90deg,#1b1b1b 0,#1b1b1b 20%,#2e2a24 38%,#2c2822 56%,#191919 64%,#191919 100%);align-items:stretch}
nav{display:grid;grid-template-columns:repeat(26,1fr);width:863px;margin-right:auto}nav button{border-bottom:2px solid transparent}
nav .run{border-image:linear-gradient(90deg,transparent 10%,#82b8e6 10%,#82b8e6 90%,transparent 90%) 2}nav .act{background:#454545}
.t{display:flex;align-items:center;gap:5px;font-size:9px;white-space:nowrap}.clock{display:block;text-align:center;font-size:8px;line-height:12px;padding:2px 0;margin:0 11px 0 8px}
.n{gap:0;font-size:7px;margin-right:10px}.n span{border:1px solid #ddd;border-radius:50%;width:9px;height:9px;line-height:7px;text-align:center;margin:8px 0 0 -5px;background:#191919}`,
  () => `<nav>${APPS.map(a => { const k = a.replace('*', ''); return `<button class="${a != k ? 'run' : ''} ${k == 'excel' ? 'act' : ''}" aria-label="${k}"><x-icon name="${k}" size="${k == 'win' ? 12 : 16}"></x-icon></button>`; }).join('')}</nav>
<span class="t"><x-icon name="cloud" size="16"></x-icon>14°C&nbsp; Nuvoloso</span><span class="t" style="margin-left:16px"><x-icon name="chevup" size="9"></x-icon><x-icon name="vol" size="12"></x-icon></span>
<span class="clock">16:10<br>20/02/2024</span><button class="n" aria-label="notifiche"><x-icon name="msg" size="12"></x-icon><span>5</span></button>`);
</script>
</body>
</html>
